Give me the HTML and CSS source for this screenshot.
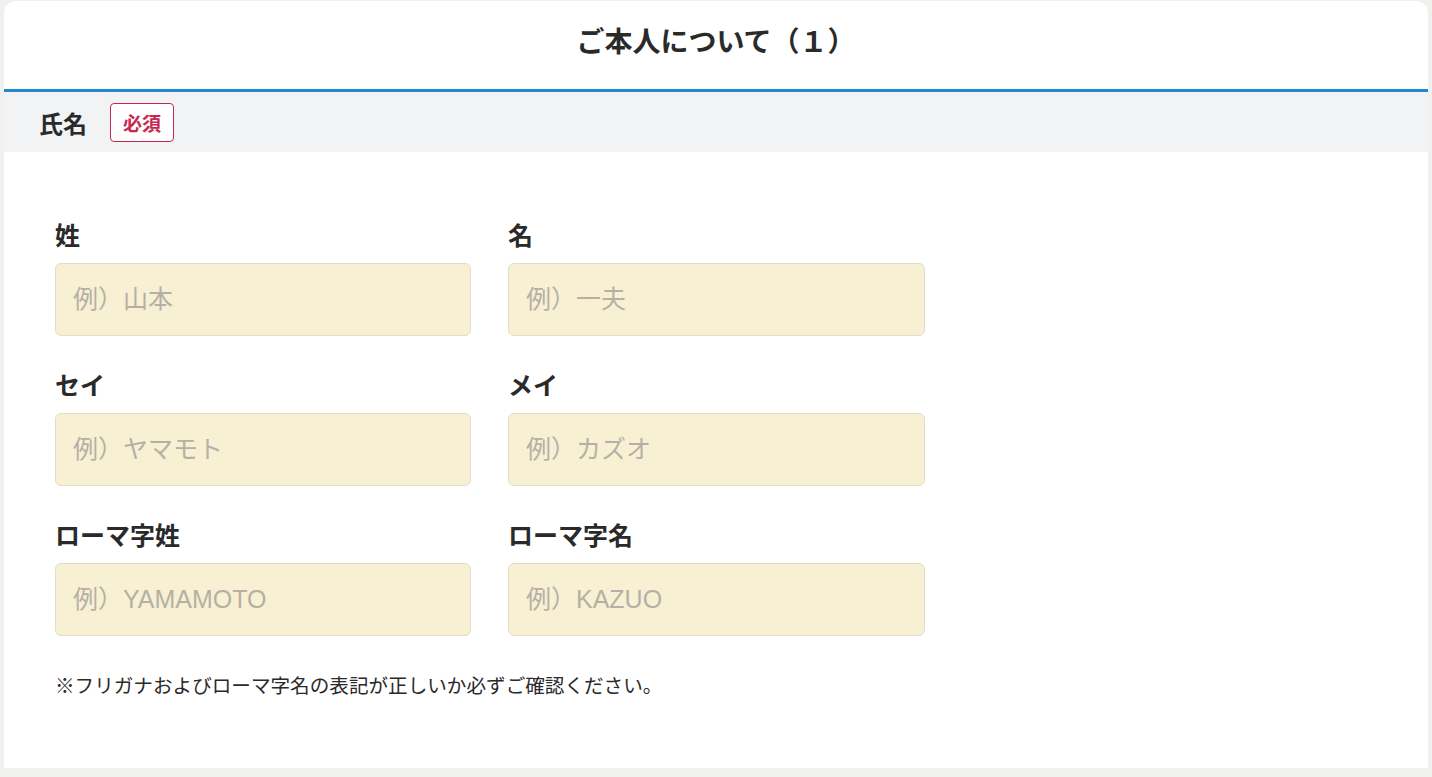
FILE: index.html
```html
<!DOCTYPE html>
<html lang="ja">
<head>
<meta charset="utf-8">
<title>ご本人について（1）</title>
<link rel="stylesheet" href="styles.css">
</head>
<body>
<div class="page">
  <section class="card">
    <header class="card-head">
      <h1 class="card-title">ご本人について（１）</h1>
    </header>
    <div class="section-head">
      <span class="section-title">氏名</span>
      <span class="badge">必須</span>
    </div>
    <div class="section-body">
      <div class="grid">
        <div class="field">
          <label class="field-label">姓</label>
          <input class="field-input" type="text" placeholder="例）山本">
        </div>
        <div class="field">
          <label class="field-label">名</label>
          <input class="field-input" type="text" placeholder="例）一夫">
        </div>
        <div class="field">
          <label class="field-label">セイ</label>
          <input class="field-input" type="text" placeholder="例）ヤマモト">
        </div>
        <div class="field">
          <label class="field-label">メイ</label>
          <input class="field-input" type="text" placeholder="例）カズオ">
        </div>
        <div class="field">
          <label class="field-label">ローマ字姓</label>
          <input class="field-input" type="text" placeholder="例）YAMAMOTO">
        </div>
        <div class="field">
          <label class="field-label">ローマ字名</label>
          <input class="field-input" type="text" placeholder="例）KAZUO">
        </div>
      </div>
      <p class="note">※フリガナおよびローマ字名の表記が正しいか必ずご確認ください。</p>
    </div>
  </section>
</div>
</body>
</html>
```

FILE: styles.css
```css
html, body {
  margin: 0;
  padding: 0;
}
body {
  background: #f0f0ef;
  font-family: "Liberation Sans", "Noto Sans CJK JP", sans-serif;
  color: #222;
  height: 777px;
  overflow: hidden;
}
.page {
  padding: 1px 4px 0 4px;
}
.card {
  background: #fff;
  border-radius: 12px 12px 0 0;
  overflow: hidden;
}
.card-head {
  height: 88px;
  display: flex;
  align-items: center;
  justify-content: center;
  border-bottom: 3px solid #1e8bca;
}
.card-title {
  margin: 0;
  font-size: 28px;
  font-weight: 700;
  color: #2a2a2a;
  line-height: 36px;
  padding-bottom: 4px;
}
.section-head {
  background: #f2f3f5;
  height: 60px;
  display: flex;
  align-items: center;
  padding-left: 35px;
}
.section-title {
  font-size: 24px;
  font-weight: 700;
  color: #2a2a2a;
  margin-right: 23px;
}
.badge {
  display: inline-flex;
  align-items: center;
  justify-content: center;
  width: 62px;
  height: 37px;
  border: 1px solid #c8284f;
  border-radius: 4px;
  color: #c8284f;
  font-size: 19px;
  font-weight: 700;
  background: #fff;
}
.section-body {
  padding: 68px 51px 0 51px;
  height: 616px;
  box-sizing: border-box;
}
.grid {
  display: grid;
  grid-template-columns: 416px 417px;
  column-gap: 37px;
  row-gap: 34px;
}
.field {
  display: flex;
  flex-direction: column;
}
.field-label {
  font-size: 25px;
  font-weight: 700;
  color: #2a2a2a;
  line-height: 32px;
  margin-bottom: 11px;
}
.field-input {
  height: 73px;
  box-sizing: border-box;
  border: 1px solid #e2ddc8;
  border-radius: 6px;
  background: #f7f0d2;
  padding: 0 17px;
  font-family: "Liberation Sans", "Noto Sans CJK JP", sans-serif;
  font-size: 25px;
  color: #333;
  outline: none;
}
.field-input::placeholder {
  color: #b5b0a6;
}
.note {
  margin: 34px 0 0 0;
  font-size: 19.6px;
  color: #2a2a2a;
}
```
